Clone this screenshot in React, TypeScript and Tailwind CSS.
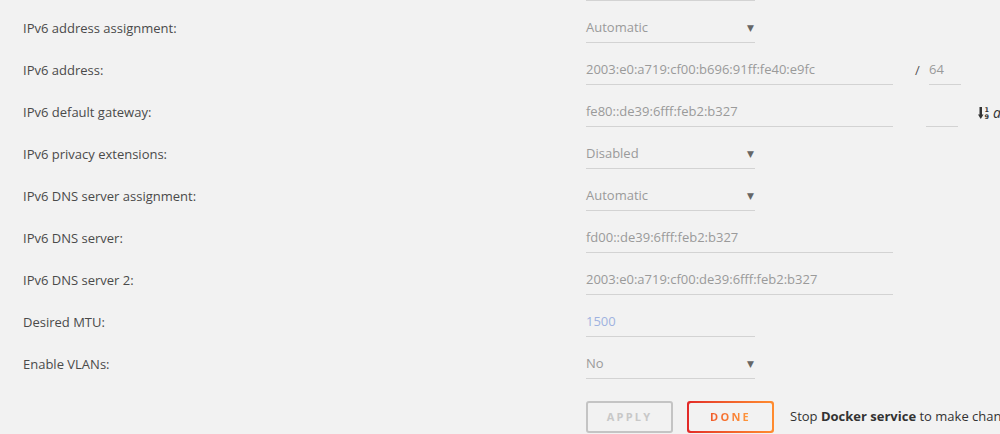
import React from "react";

type Row = {
  label: string;
  value: string;
  kind: "select" | "long" | "short";
  extra?: "prefix" | "gateway";
  accent?: boolean;
};

const rows: Row[] = [
  { label: "IPv6 address assignment:", value: "Automatic", kind: "select" },
  { label: "IPv6 address:", value: "2003:e0:a719:cf00:b696:91ff:fe40:e9fc", kind: "long", extra: "prefix" },
  { label: "IPv6 default gateway:", value: "fe80::de39:6fff:feb2:b327", kind: "long", extra: "gateway" },
  { label: "IPv6 privacy extensions:", value: "Disabled", kind: "select" },
  { label: "IPv6 DNS server assignment:", value: "Automatic", kind: "select" },
  { label: "IPv6 DNS server:", value: "fd00::de39:6fff:feb2:b327", kind: "long" },
  { label: "IPv6 DNS server 2:", value: "2003:e0:a719:cf00:de39:6fff:feb2:b327", kind: "long" },
  { label: "Desired MTU:", value: "1500", kind: "short", accent: true },
  { label: "Enable VLANs:", value: "No", kind: "select" },
];

function SortIcon() {
  return (
    <svg width="12" height="14" viewBox="0 0 12 14" className="shrink-0">
      <rect x="1.5" y="1" width="2.5" height="9" fill="#333" />
      <path d="M0 8.5 L5.5 8.5 L2.75 13 Z" fill="#333" />
      <text x="6.5" y="6" fontSize="6.5" fontWeight="bold" fontFamily="DejaVu Sans, sans-serif" fill="#333">1</text>
      <text x="6.5" y="13" fontSize="6.5" fontWeight="bold" fontFamily="DejaVu Sans, sans-serif" fill="#333">9</text>
    </svg>
  );
}

function Field({ row }: { row: Row }) {
  const width = row.kind === "long" ? "w-[307px]" : "w-[169px]";
  return (
    <div className={`${width} shrink-0 h-[29px] border-b border-[#d3d3d3] flex items-center justify-between`}>
      <span className={row.accent ? "text-[#9fb2e0]" : "text-[#9a9a9a]"}>{row.value}</span>
      {row.kind === "select" && <span className="text-[9px] text-[#666] mr-[1px]">▼</span>}
    </div>
  );
}

export default function App() {
  return (
    <div
      className="w-[1000px] h-[434px] overflow-hidden bg-[#f2f2f2] text-[13px]"
      style={{ fontFamily: '"Open Sans", "DejaVu Sans", sans-serif' }}
    >
      <div className="pl-[586px]">
        <div className="w-[169px] border-b border-[#d3d3d3]" />
      </div>

      {rows.map((row) => (
        <div key={row.label} className="h-[42px] flex items-end">
          <div className="w-[586px] shrink-0 pl-[23px] h-[29px] flex items-center text-[#4a4a4a]">{row.label}</div>
          <Field row={row} />
          {row.extra === "prefix" && (
            <div className="flex items-end">
              <span className="w-[36px] pl-[22px] h-[29px] flex items-center text-[#555]">/</span>
              <div className="w-[32px] h-[29px] border-b border-[#d3d3d3] flex items-center text-[#9a9a9a]">64</div>
            </div>
          )}
          {row.extra === "gateway" && (
            <div className="flex items-end">
              <div className="ml-[33px] w-[32px] h-[29px] border-b border-[#d3d3d3]" />
              <div className="ml-[20px] h-[29px] flex items-center gap-[3px]">
                <SortIcon />
                <span className="italic text-[#333] text-[14px]">a</span>
              </div>
            </div>
          )}
        </div>
      ))}

      <div className="mt-[22px] pl-[586px] flex items-center">
        <button className="shrink-0 w-[87px] h-[32px] border-2 border-[#c4c4c4] rounded-[3px] text-[11px] font-bold tracking-[0.2em] text-[#c8c8c8]">
          APPLY
        </button>
        <div className="shrink-0 ml-[14px] w-[87px] h-[32px] rounded-[3px] p-[2px] bg-gradient-to-r from-[#e22828] to-[#ff8c2f]">
          <div className="w-full h-full rounded-[2px] bg-[#f2f2f2] flex items-center justify-center">
            <span className="text-[11px] font-bold tracking-[0.2em] bg-gradient-to-r from-[#f05a2a] to-[#ff9a3c] bg-clip-text text-transparent">
              DONE
            </span>
          </div>
        </div>
        <span className="ml-[16px] whitespace-nowrap text-[#333]">
          Stop <b>Docker service</b> to make changes
        </span>
      </div>
    </div>
  );
}
